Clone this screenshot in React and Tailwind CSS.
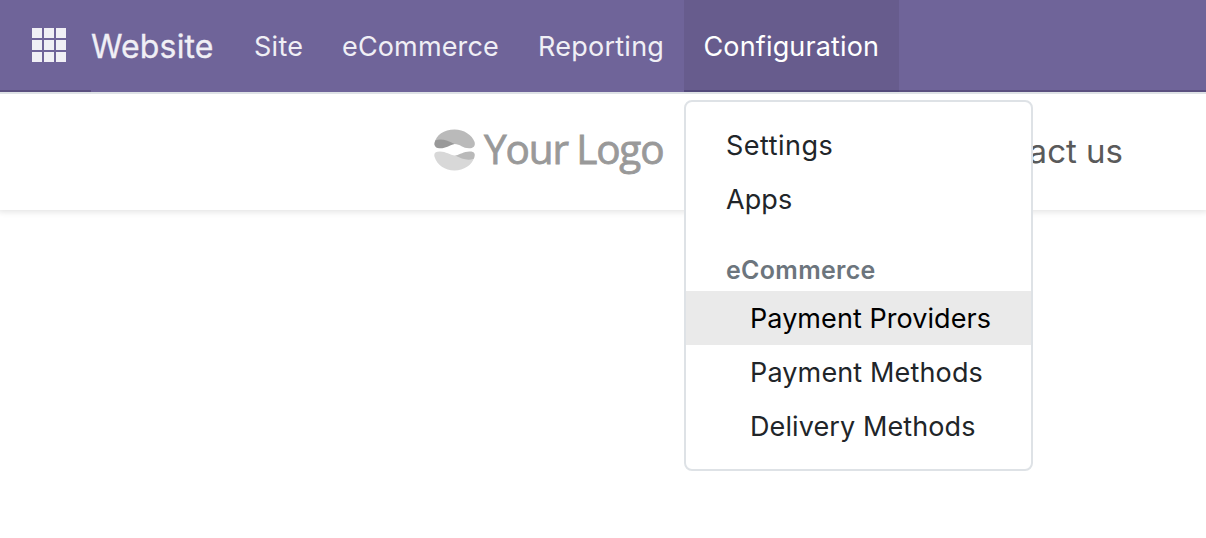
const navItems = [
  { label: 'Site', box: 'w-[89px] pl-[20px]', text: 'tracking-[0.3px]' },
  { label: 'eCommerce', box: 'w-[196px] pl-[19px]', text: 'tracking-[0.15px]' },
  { label: 'Reporting', box: 'w-[165px] pl-[19px]', text: 'tracking-[0.25px]' },
];

function AppsIcon() {
  return (
    <svg width="34" height="34" viewBox="0 0 34 34" fill="#f0eff5">
      {[0, 12, 24].map((y) =>
        [0, 12, 24].map((x) => <rect key={`${x}-${y}`} x={x} y={y} width="10" height="10" />)
      )}
    </svg>
  );
}

function LogoMark() {
  return (
    <svg className="mb-[4px] shrink-0" width="42" height="42" viewBox="0 0 42 42">
      <path d="M0.4 14.5C2 6 10 0.5 20.5 0.5C30 0.5 38 6 40.6 13C41.6 17 39.5 19.3 35 19.3C29 19.3 26 15 20.5 15L9 17C4 18 0 18 0.4 14.5Z" fill="#bababa" />
      <path d="M1.3 11.5C7 9.3 14 11.5 20.5 15C15 16.5 12 19.3 6.5 19.3C1 19.3 -0.5 16.5 1.3 11.5Z" fill="#999999" />
      <path d="M0.6 28C3 36 11 41.4 20.5 41.4C30 41.4 38 36 40.2 28.5L21 26.5C16 26 12 22.4 6 22.4C1.5 22.4 -0.6 24 0.6 28Z" fill="#d8d8d8" />
      <path d="M21 26.5C26.5 25.5 29.5 22.4 35.5 22.4C41 22.4 41.8 25 39.8 29.8C33 32 27.5 29.5 21 26.5Z" fill="#b9b9b9" />
    </svg>
  );
}

function Dropdown() {
  return (
    <div className="absolute left-0 top-[100px] z-10 flex h-[371px] w-[349px] flex-col rounded-[8px] border-2 border-[#dee2e6] bg-white py-4 text-[27px] leading-[56px] tracking-[0.1px] text-[#212529]">
      <a className="h-[54px] pl-[40px] tracking-[0.5px]"><span>Settings</span></a>
      <a className="h-[54px] pl-[40px]"><span>Apps</span></a>
      <div className="h-[65px] pl-[40px] pt-[16px] text-[25px] font-semibold tracking-[0.3px] text-[#6c757d]"><span>eCommerce</span></div>
      <a className="h-[54px] bg-[#eaeaea] pl-[64px] tracking-[0.06px] text-black"><span>Payment Providers</span></a>
      <a className="h-[54px] pl-[64px] tracking-[0.14px]"><span>Payment Methods</span></a>
      <a className="h-[54px] pl-[64px]"><span>Delivery Methods</span></a>
    </div>
  );
}

export default function App() {
  return (
    <div className="h-[538px] w-[1206px] overflow-hidden whitespace-nowrap bg-white font-['Inter',sans-serif]">
      <header className="flex h-[94px] border-b-2 border-[#dee2e6] bg-[#6f6499] text-[27px] leading-[94px] text-[#f0eff5]">
        <div className="flex h-[92px] w-[91px] border-b-2 border-[#5a4f7f] pl-[32px] pt-[28px]">
          <AppsIcon />
        </div>
        <a className="w-[143px] text-[32px] tracking-[0.15px] [-webkit-text-stroke:0.3px_#f0eff5]"><span>Website</span></a>
        {navItems.map((item) => (
          <a key={item.label} className={item.box}><span className={item.text}>{item.label}</span></a>
        ))}
        <div className="relative h-[92px] w-[215px]">
          <a className="block h-[92px] border-b-2 border-[#52497a] bg-[#675c8d] pl-[19.5px] tracking-[0.15px] text-white"><span>Configuration</span></a>
          <Dropdown />
        </div>
        <div className="h-[92px] flex-1 border-b-2 border-[#5a4f7f]" />
      </header>
      <div className="flex h-[116px] items-center bg-white pl-[434px] shadow-[0_0_6px_2px_rgba(0,0,0,0.11)] [clip-path:inset(0_0_-10px_0)]">
        <LogoMark />
        <span className="mb-[7px] ml-[8px] w-[200px] font-['Open_Sans',sans-serif] text-[40.5px] leading-[56px] tracking-[-1.15px] [-webkit-text-stroke:0.8px_#999999] [word-spacing:-1px] text-[#999999]">Your Logo</span>
        <span className="flex w-[439px] justify-end text-[33px] text-[#5a5a5a]">Contact us</span>
      </div>
    </div>
  );
}
